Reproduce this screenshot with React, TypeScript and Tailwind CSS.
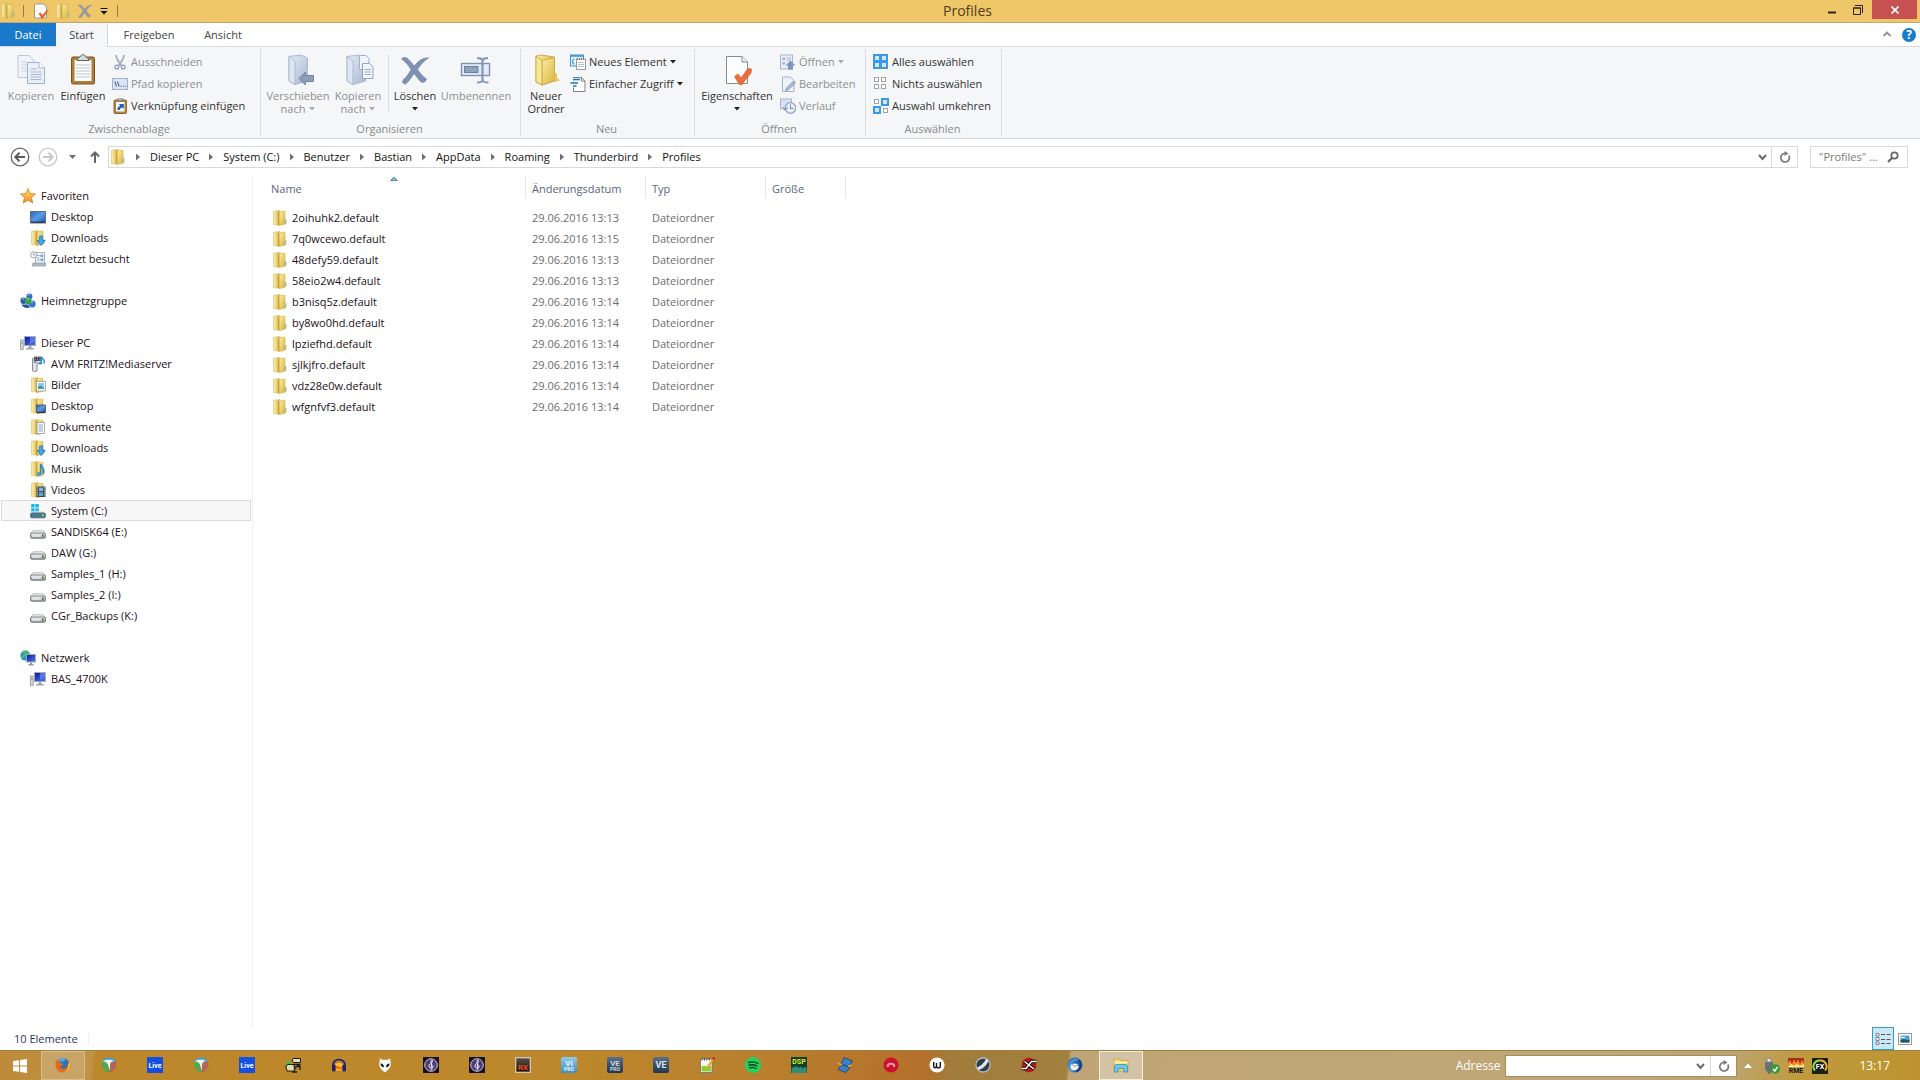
import React from 'react';
import type { ReactNode } from 'react';

/* ---------- shared icon helpers ---------- */

type SvgProps = { w?: number; h?: number; vb?: string; children: ReactNode };
const Svg = ({ w = 16, h = 16, vb = '0 0 16 16', children }: SvgProps) => (
  <svg width={w} height={h} viewBox={vb} fill="none" className="shrink-0" aria-hidden="true">
    {children}
  </svg>
);

const Defs = () => (
  <svg width="0" height="0" className="absolute" aria-hidden="true">
    <defs>
      <linearGradient id="fold" x1="0" y1="0" x2="1" y2="1">
        <stop offset="0" stopColor="#fbeea8" />
        <stop offset="1" stopColor="#dcb23a" />
      </linearGradient>
      <linearGradient id="foldB" x1="0" y1="0" x2="1" y2="0">
        <stop offset="0" stopColor="#faeeb0" />
        <stop offset="1" stopColor="#dcb94c" />
      </linearGradient>
      <linearGradient id="blueFold" x1="0" y1="0" x2="1" y2="1">
        <stop offset="0" stopColor="#e3ebf6" />
        <stop offset="1" stopColor="#a9b8d0" />
      </linearGradient>
      <linearGradient id="screen" x1="0" y1="0" x2="1" y2="1">
        <stop offset="0" stopColor="#2b62b8" />
        <stop offset="0.5" stopColor="#5b9be6" />
        <stop offset="1" stopColor="#1d4f9e" />
      </linearGradient>
      <linearGradient id="navy" x1="0" y1="0" x2="1" y2="1">
        <stop offset="0" stopColor="#0a12a0" />
        <stop offset="1" stopColor="#4d7df0" />
      </linearGradient>
      <linearGradient id="drive" x1="0" y1="0" x2="0" y2="1">
        <stop offset="0" stopColor="#f4f4f4" />
        <stop offset="1" stopColor="#9a9a9a" />
      </linearGradient>
      <linearGradient id="slate" x1="0" y1="0" x2="0" y2="1">
        <stop offset="0" stopColor="#5a6f88" />
        <stop offset="1" stopColor="#22364d" />
      </linearGradient>
      <linearGradient id="sky" x1="0" y1="0" x2="0" y2="1">
        <stop offset="0" stopColor="#8ecbea" />
        <stop offset="1" stopColor="#3d8dbd" />
      </linearGradient>
      <linearGradient id="star" x1="0" y1="0" x2="0" y2="1">
        <stop offset="0" stopColor="#ffe27a" />
        <stop offset="1" stopColor="#f08a1c" />
      </linearGradient>
      <linearGradient id="rx" x1="0" y1="0" x2="0" y2="1">
        <stop offset="0" stopColor="#55504c" />
        <stop offset="1" stopColor="#1c0d08" />
      </linearGradient>
    </defs>
  </svg>
);

const FolderShape = () => (
  <>
    <path d="M1.5 1.2 L8 0.5 V15.2 L1.5 14.6 Z" fill="url(#foldB)" stroke="#d8bd62" strokeWidth="0.6" />
    <path d="M7 1.6 L13 1.2 V14.2 L7 15.6 Z" fill="url(#fold)" stroke="#d3b04a" strokeWidth="0.6" />
    <path d="M5.6 1.6 L7.4 2.6 V15.6 L5.6 14.8 Z" fill="#c79b30" opacity="0.7" />
    <path d="M12.6 9.5 L14.4 9 V13.6 L12.6 14 Z" fill="#9dbfa0" />
  </>
);
const Folder = ({ children }: { children?: ReactNode }) => (
  <Svg>
    <FolderShape />
    {children}
  </Svg>
);

/* ---------- navigation pane icons ---------- */

const StarIcon = () => (
  <Svg>
    <path d="M8 0.6 L10.1 5.6 L15.5 6 L11.4 9.5 L12.8 15 L8 12 L3.2 15 L4.6 9.5 L0.5 6 L5.9 5.6 Z" fill="url(#star)" stroke="#dc7a1a" strokeWidth="0.8" />
  </Svg>
);
const DesktopIcon = () => (
  <Svg>
    <rect x="0.5" y="2.5" width="15" height="11.5" fill="url(#screen)" stroke="#5f6f86" />
    <path d="M1 12.6 H15 V13.8 H1 Z" fill="#2a3444" />
  </Svg>
);
const DownArrow = () => (
  <path d="M9.6 6 H12.6 V10.5 H15.2 L11.1 15.6 L7 10.5 H9.6 Z" fill="#49a8ea" stroke="#1f76bd" strokeWidth="0.8" />
);
const DownloadsIcon = () => <Folder><DownArrow /></Folder>;
const PicturesIcon = () => (
  <Folder>
    <rect x="6.5" y="4.5" width="9" height="9.5" fill="#fff" stroke="#8a9aa8" strokeWidth="0.8" />
    <rect x="8" y="6" width="6" height="6" fill="#8fc5e8" />
    <path d="M8 12 V10 L10.5 8.6 L14 11 V12 Z" fill="#4c9a78" />
  </Folder>
);
const DesktopFolderIcon = () => (
  <Folder>
    <rect x="6.5" y="7" width="9" height="7" fill="url(#screen)" stroke="#44566f" strokeWidth="0.8" />
    <path d="M7 14 H15.5 V15.2 H7 Z" fill="#2b3644" />
  </Folder>
);
const DocumentsIcon = () => (
  <Folder>
    <rect x="7" y="3.5" width="7.5" height="11" fill="#fff" stroke="#8a9aa8" strokeWidth="0.8" />
    <path d="M8.5 6 H13 M8.5 8 H13 M8.5 10 H13 M8.5 12 H13" stroke="#6c8cae" strokeWidth="0.8" />
  </Folder>
);
const MusicIcon = () => (
  <Folder>
    <path d="M10.6 3 C11 6.4 15.5 7.4 13.2 12.4" stroke="#2a86c4" strokeWidth="1.6" />
    <ellipse cx="9" cy="13" rx="2.4" ry="1.9" fill="#3fa0dc" />
    <path d="M10.6 3 V13" stroke="#2a86c4" strokeWidth="1.4" />
  </Folder>
);
const VideosIcon = () => (
  <Folder>
    <rect x="6.5" y="4.5" width="9" height="10.5" fill="#3a4856" />
    <path d="M7.6 5.2 V15 M14.4 5.2 V15" stroke="#dce5ec" strokeWidth="0.9" strokeDasharray="1.2 1.2" />
    <rect x="9" y="5.6" width="4" height="3.6" fill="#7cb8de" />
    <rect x="9" y="10.4" width="4" height="3.6" fill="#6aa6c8" />
  </Folder>
);
const RecentIcon = () => (
  <Svg>
    <rect x="5.5" y="1.5" width="9" height="11" fill="#f2f5f8" stroke="#93a0ab" strokeWidth="0.8" />
    <path d="M7 4.5 H9.5 M7 7 H9.5 M7 9.2 H9.5" stroke="#9aa7b2" />
    <path d="M10.5 3.5 H13.2 V6 H10.5 Z M10.5 7.5 H13.2 V10 H10.5 Z" fill="#62a6dc" />
    <path d="M3 12 H15.5 V15 H2 Z" fill="#b4bcc3" stroke="#868e95" strokeWidth="0.6" />
    <circle cx="3.6" cy="3.8" r="3" fill="#fff" stroke="#8b98a3" strokeWidth="0.9" />
    <path d="M3.6 2 V4 H5" stroke="#6b7680" strokeWidth="0.7" />
  </Svg>
);
const HomegroupIcon = () => (
  <Svg>
    <circle cx="9.4" cy="3.6" r="3" fill="#2f6fc2" />
    <circle cx="3.6" cy="7.8" r="3.2" fill="#2c5fb4" />
    <circle cx="12.3" cy="11" r="3.4" fill="#3c78c8" />
    <circle cx="8.2" cy="8" r="3.4" fill="#35a546" />
    <path d="M6.5 6.6 A2 2 0 0 1 9 5.8" stroke="#b2ecb8" strokeWidth="1" />
    <path d="M1.5 11.5 C3 14.8 7 15.4 10 14.6 L8 11.6 Z" fill="#2450a0" />
    <path d="M2.2 6.6 A1.8 1.8 0 0 1 4.2 5.8 M8 2.6 A1.6 1.6 0 0 1 10 1.8 M11 9.6 A2 2 0 0 1 13 8.9" stroke="#bcd8f6" strokeWidth="0.9" />
  </Svg>
);
const PcIcon = () => (
  <Svg>
    <rect x="4.5" y="1.5" width="11" height="9" fill="url(#navy)" stroke="#a5adb6" />
    <path d="M10 2 H15 V6 L10 9 Z" fill="#7fa4ff" opacity="0.5" />
    <path d="M8.5 11 H11.5 V13 H14 V14.4 H6 V13 H8.5 Z" fill="#9da5ad" />
    <rect x="0.6" y="5" width="2.6" height="9.4" fill="#cfd5da" stroke="#838b92" strokeWidth="0.7" />
    <rect x="1.2" y="7.4" width="1.4" height="1.2" fill="#4fb548" />
  </Svg>
);
const MediaIcon = () => (
  <Svg>
    <rect x="2.5" y="2" width="4.6" height="13.4" rx="1" fill="#dfe2e5" stroke="#7c8388" strokeWidth="0.9" />
    <path d="M3.8 4 H6 M3.8 6 H6" stroke="#3b4247" />
    <rect x="4" y="0.6" width="7" height="4.4" fill="#3a424c" />
    <path d="M5 1 V5 M7.5 1 V5 M10 1 V5" stroke="#d3dbe2" strokeWidth="0.8" strokeDasharray="1 0.8" />
    <path d="M11.5 0.5 V7 M11.5 1 C12.5 3 15.4 3.4 14 7.6" stroke="#2f8ecd" strokeWidth="1.3" />
    <ellipse cx="10.2" cy="7.2" rx="1.8" ry="1.4" fill="#2f8ecd" />
  </Svg>
);
const DriveIcon = () => (
  <Svg>
    <path d="M3 6.8 H13 L15.4 9.6 H0.6 Z" fill="#f7f7f7" stroke="#9b9b9b" strokeWidth="0.7" />
    <rect x="0.6" y="9" width="14.8" height="5.2" rx="1.2" fill="url(#drive)" stroke="#6d6d6d" strokeWidth="0.9" />
    <rect x="2" y="10.2" width="8.6" height="2.6" fill="#e3e3ea" />
    <rect x="12" y="10.4" width="1.8" height="2.4" fill="#4b8c3c" />
  </Svg>
);
const SystemDriveIcon = () => (
  <Svg>
    <path d="M1.2 1 H4.6 V4.4 H1.2 Z M5.4 1 H8.8 V4.4 H5.4 Z M1.2 5.2 H4.6 V8.6 H1.2 Z M5.4 5.2 H8.8 V8.6 H5.4 Z" fill="#18b4ea" />
    <path d="M3 8.6 H13 L15.2 10.4 H0.8 Z" fill="#d7dde0" />
    <rect x="0.6" y="10" width="14.8" height="4.8" rx="1.2" fill="#3d7d95" stroke="#5c656a" strokeWidth="0.9" />
    <rect x="12" y="11.2" width="1.8" height="2.2" fill="#7ae05c" />
  </Svg>
);
const NetworkIcon = () => (
  <Svg>
    <circle cx="5.4" cy="5.6" r="5" fill="#2f8fd0" />
    <path d="M2 3 C4 1 6 3 5 5 C4 7 2 6 1.4 8 M6.5 1 C8 2 9 3 8 5" stroke="#4cc25c" strokeWidth="1.8" />
    <rect x="6.5" y="4.5" width="9" height="7.5" fill="url(#navy)" stroke="#a5adb6" strokeWidth="0.9" />
    <path d="M10 12.5 H12 V14 H13.5 V15.4 H8.5 V14 H10 Z" fill="#8f979f" />
  </Svg>
);

/* ---------- ribbon icons ---------- */

const Big = ({ children }: { children: ReactNode }) => <Svg w={32} h={32} vb="0 0 32 32">{children}</Svg>;

const CopyBig = () => (
  <Big>
    <path d="M3 1.5 H14 L19 6.5 V23.5 H3 Z" fill="#eef3fa" stroke="#b9c7de" />
    <path d="M6 8 H12 M6 11 H12 M6 14 H12 M6 17 H12" stroke="#c6d3e6" />
    <path d="M12.5 8.5 H24 L29.5 14 V29.5 H12.5 Z" fill="#eaf0f8" stroke="#a0b2d0" />
    <path d="M24 8.5 V14 H29.5" fill="#fff" stroke="#a0b2d0" />
    <path d="M15.5 15 H22 M15.5 18 H26.5 M15.5 20.5 H26.5 M15.5 23 H26.5 M15.5 25.5 H26.5" stroke="#a7b8d4" strokeWidth="1.2" />
  </Big>
);
const PasteBig = () => (
  <Big>
    <rect x="4.5" y="3" width="23" height="27" rx="1.5" fill="#b17a35" stroke="#7c5422" />
    <rect x="7.5" y="6" width="17" height="21" fill="#fdfdfd" />
    <path d="M8.5 11 H23.5 M8.5 14 H23.5 M8.5 17 H23.5 M8.5 20 H23.5 M8.5 23 H23.5" stroke="#b9c6d6" strokeWidth="1.2" />
    <path d="M10 6.5 C10 3.5 13 4 13.5 2.6 C14 0 18 0 18.5 2.6 C19 4 22 3.5 22 6.5 Z" fill="#d5dadd" stroke="#5d6468" />
  </Big>
);
const BlueFolder = () => (
  <>
    <path d="M5 2.5 L17 1 L23.5 4 V27 L11 30.5 L5 27 Z" fill="url(#blueFold)" stroke="#a3b4cd" strokeWidth="0.9" />
    <path d="M5 2.5 L11 7 V30.5 L5 27 Z" fill="#dce5f1" stroke="#a3b4cd" strokeWidth="0.8" />
  </>
);
const MoveBig = () => (
  <Big>
    <g transform="translate(2 0)"><BlueFolder /></g>
    <path d="M17 24.5 L23.5 18 V21.5 H31.5 V27.5 H23.5 V31 Z" fill="#8d9db6" stroke="#73849f" />
  </Big>
);
const CopyToBig = () => (
  <Big>
    <BlueFolder />
    <path d="M17.5 1.5 H24 L27 4.5 V15.5 H17.5 Z" fill="#f2f6fb" stroke="#9fb1ce" />
    <path d="M20.5 9.5 H27.5 L31 13 V24.5 H20.5 Z" fill="#f2f6fb" stroke="#8fa3c3" />
    <path d="M22.5 15.5 H29 M22.5 18 H29 M22.5 20.5 H29" stroke="#9aadcb" />
  </Big>
);
const DeleteShape = () => (
  <path d="M2.5 5 C4.5 3 7 3.2 9 5 L15.5 12 C19 7 23 4 29.5 3.8 C25 7 21.5 10.5 18.5 15.5 C21.5 19.5 24 23 27.5 25 C26.5 28.5 23 29.5 21 27 L15 19.5 C12 24 9.5 28 6.5 30 C3.5 30 2.8 27.5 4.5 25.5 C7.5 23 10 19.5 12 15.5 C9.5 11.5 6.5 7.5 2.5 5 Z" fill="#7e91b3" stroke="#697c9e" strokeWidth="0.6" />
);
const RenameBig = () => (
  <Big>
    <rect x="1.5" y="9.5" width="28" height="12" fill="#e4ebf5" stroke="#7f93b4" strokeWidth="1.4" />
    <rect x="4.5" y="12.5" width="13.5" height="6" fill="#8fa2c0" stroke="#6b7f9f" />
    <path d="M17 4 C20 4 21.5 4.5 22.5 6 C23.5 4.5 25 4 28 4 M22.5 6 V27 M17 28.5 C20.5 28.5 22 28 22.5 26.5 C23.5 28 25.5 28.5 28.5 28.5" stroke="#8396b6" strokeWidth="2.2" />
  </Big>
);
const NewFolderBig = () => (
  <Big>
    <path d="M6 2 L12 1 L24.5 3 V27 L12 31 L6 28 Z" fill="url(#foldB)" stroke="#c6a23c" strokeWidth="0.8" />
    <path d="M12 6.5 L24.5 3.5 V26.5 L12 31 Z" fill="url(#fold)" stroke="#cba63c" strokeWidth="0.8" />
    <path d="M6 2 L12 6.5 V31 L6 28 Z" fill="#f7e693" stroke="#c6a23c" strokeWidth="0.8" />
    <path d="M24.5 19 L27 19.5 V24 L30 26.5 L24.5 28 Z" fill="#e3c85c" />
  </Big>
);
const PropertiesBig = () => (
  <Big>
    <path d="M5.5 2.5 H21 L26.5 8 V29.5 H5.5 Z" fill="#fdfdfd" stroke="#8c8c8c" />
    <path d="M21 2.5 V8 H26.5" fill="#eee" stroke="#8c8c8c" />
    <path d="M13.5 22.5 L17 20 L20 24 L27 14.5 L30.5 15 L30 19 L20.5 31 L18.5 30.5 Z" fill="#ec6c3c" stroke="#cf5326" strokeWidth="0.6" />
  </Big>
);

const CutIcon = () => (
  <Svg>
    <path d="M4.2 1 C4 4 6.5 8 9.5 11.5 M11.8 1 C12 4 9.5 8 6.5 11.5" stroke="#a8b2c0" strokeWidth="2" />
    <circle cx="4.8" cy="13" r="1.9" stroke="#8b9ec0" strokeWidth="1.3" />
    <circle cx="11.2" cy="13" r="1.9" stroke="#8b9ec0" strokeWidth="1.3" />
  </Svg>
);
const PathIcon = () => (
  <Svg>
    <rect x="0.5" y="2.5" width="15" height="11" fill="#dbe5f3" stroke="#9fb0cb" />
    <path d="M2.8 5.5 L4.6 10.5 M5.4 5.5 L7.2 10.5 M8.5 10.3 H9.8 M11 10.3 H12.3 M13.2 10.3 H14.2" stroke="#5d6e8c" strokeWidth="1.1" />
  </Svg>
);
const ShortcutIcon = () => (
  <Svg>
    <rect x="2" y="2" width="12.5" height="13.5" rx="1" fill="#b57f3e" stroke="#80551f" strokeWidth="0.8" />
    <rect x="4" y="4" width="8.5" height="9.5" fill="#fff" />
    <path d="M5.5 2.8 H11 V0.8 H5.5 Z" fill="#b8bfc4" stroke="#666" strokeWidth="0.6" />
    <path d="M5.5 12 C5 9.5 6.5 8.3 8.2 8 L7 6 H11.8 V10.8 L10 9.4 C8.6 9.8 7.8 10.6 8 12 Z" fill="#1b62b6" />
  </Svg>
);
const NewItemIcon = () => (
  <Svg>
    <rect x="0.5" y="1" width="13" height="11" fill="#e9f4fc" stroke="#3d92ce" />
    <path d="M0.5 2 H13.5" stroke="#3d92ce" strokeWidth="1.6" />
    <path d="M4.5 5 C2 5 2 10 4.5 10" stroke="#3d92ce" strokeWidth="1.2" />
    <rect x="6.5" y="5" width="9" height="10.5" fill="#fff" stroke="#8a9198" strokeWidth="0.9" />
    <path d="M7.5 4.2 V6 M9.5 4.2 V6 M11.5 4.2 V6 M13.5 4.2 V6" stroke="#777" strokeWidth="0.9" />
    <path d="M8 8.5 H14 M8 10.5 H14 M8 12.5 H14" stroke="#b1bac2" strokeWidth="0.9" />
  </Svg>
);
const EasyIcon = () => (
  <Svg>
    <path d="M3.5 1.5 H11.5 L15 5 V15.5 H3.5 Z" fill="#fff" stroke="#7d848a" />
    <path d="M11.5 1.5 V5 H15" stroke="#7d848a" />
    <path d="M2 3.6 H10 M0 7 H8 M2 10 H6.5" stroke="#f5f6f7" strokeWidth="3" />
    <path d="M3 3.6 H10 M0.5 7 H8 M3 10 H6.5" stroke="#1e76b8" strokeWidth="1.5" />
  </Svg>
);
const OpenIcon = () => (
  <Svg>
    <rect x="0.5" y="1" width="12" height="14" fill="#e8eef7" stroke="#a8b7d0" />
    <path d="M2.5 3.5 H5 V6 H2.5 Z M2.5 8 H5 V10.5 H2.5 Z" fill="#9fb1cf" />
    <path d="M6.5 4 H11 M6.5 6 H11" stroke="#a8b7d0" />
    <path d="M10.5 6.5 L15.5 11.5 H13 V15.5 H8 V11.5 H5.5 Z" fill="#8195b8" />
  </Svg>
);
const EditIcon = () => (
  <Svg>
    <path d="M2.5 1 H10.5 L14 4.5 V15.5 H2.5 Z" fill="#eef3fa" stroke="#a0b1cc" />
    <path d="M13.5 5 L15.5 7 L8 14 L5.5 14.5 L6.5 12 Z" fill="#a9bad6" stroke="#8094b5" strokeWidth="0.8" />
  </Svg>
);
const HistoryIcon = () => (
  <Svg>
    <rect x="0.5" y="1" width="11" height="10" fill="#d7e1ef" stroke="#a5b5cf" />
    <circle cx="10.5" cy="10" r="5.3" fill="#e6edf6" stroke="#93a6c6" strokeWidth="1.3" />
    <path d="M10.5 6.5 V10.5 H13.5 M3 9 L5 12 L7.5 9.5" stroke="#7f93b6" strokeWidth="1.1" />
  </Svg>
);
const Sq = ({ x, y, s, on }: { x: number; y: number; s: number; on?: boolean }) =>
  on ? (
    <>
      <rect x={x} y={y} width={s} height={s} fill="#3c97e4" />
      <rect x={x + 2} y={y + 2} width={s - 4} height={s - 4} fill="#cfe8fc" />
    </>
  ) : (
    <rect x={x + 0.5} y={y + 0.5} width={s - 1} height={s - 1} fill="#fff" stroke="#a2a2a2" />
  );
const SelAll = () => (
  <Svg><Sq x={0} y={0} s={8} on /><Sq x={7} y={0} s={8} on /><Sq x={0} y={7} s={8} on /><Sq x={7} y={7} s={8} on /></Svg>
);
const SelNone = () => (
  <Svg><Sq x={1} y={1} s={5} /><Sq x={8} y={1} s={5} /><Sq x={1} y={8} s={5} /><Sq x={8} y={8} s={5} /></Svg>
);
const SelInv = () => (
  <Svg><Sq x={1} y={1} s={5} /><Sq x={8} y={0} s={8} on /><Sq x={0} y={8} s={8} on /><Sq x={10} y={10} s={5} /></Svg>
);

/* ---------- ribbon parts ---------- */

const Caret = ({ dim }: { dim?: boolean }) => (
  <svg width="6" height="4" viewBox="0 0 6 4" className="inline-block shrink-0" aria-hidden="true">
    <path d="M0 0 H6 L3 3.5 Z" fill={dim ? '#a9a9a9' : '#222'} />
  </svg>
);

type LargeProps = { icon: ReactNode; lines: string[]; width: string; dim?: boolean; caret?: boolean };
const Large = ({ icon, lines, width, dim, caret }: LargeProps) => (
  <button type="button" disabled={dim} className={`${width} flex shrink-0 flex-col items-center pt-[3px] leading-[13px] ${dim ? 'text-[#8f8f8f]' : 'text-[#333]'}`}>
    {icon}
    <span className="mt-[3px] whitespace-nowrap">{lines[0]}</span>
    <span className="flex h-[13px] items-center gap-1 whitespace-nowrap">
      {lines[1]}
      {caret && <Caret dim={dim} />}
    </span>
  </button>
);

type SmallProps = { icon: ReactNode; label: string; dim?: boolean; caret?: boolean };
const Small = ({ icon, label, dim, caret }: SmallProps) => (
  <button type="button" disabled={dim} className={`flex h-[22px] items-center gap-[3px] whitespace-nowrap ${dim ? 'text-[#8f8f8f]' : 'text-[#333]'}`}>
    {icon}
    {label}
    {caret && <Caret dim={dim} />}
  </button>
);

const Group = ({ label, width, children }: { label: string; width: string; children: ReactNode }) => (
  <section aria-label={label} className={`${width} my-[2px] flex shrink-0 flex-col border-r border-[#dcdde0] pt-[2px]`}>
    <div className="flex flex-1">{children}</div>
    <div className="h-[14px] pr-[2px] text-center leading-[13px] text-[#8a8a8a]">{label}</div>
  </section>
);

const Ribbon = () => (
  <div className="flex h-[92px] shrink-0 border-b border-[#d5d6d8] bg-[#f5f6f7]">
    <Group label="Zwischenablage" width="w-[261px]">
      <div className="flex pl-[5px]">
        <Large icon={<CopyBig />} lines={['Kopieren']} width="w-[52px]" dim />
        <Large icon={<PasteBig />} lines={['Einfügen']} width="w-[52px]" />
        <div className="flex flex-col pl-[3px]">
          <Small icon={<CutIcon />} label="Ausschneiden" dim />
          <Small icon={<PathIcon />} label="Pfad kopieren" dim />
          <Small icon={<ShortcutIcon />} label="Verknüpfung einfügen" />
        </div>
      </div>
    </Group>
    <Group label="Organisieren" width="w-[260px]">
      <div className="flex pl-[3px]">
        <Large icon={<MoveBig />} lines={['Verschieben', 'nach']} width="w-[68px]" dim caret />
        <Large icon={<CopyToBig />} lines={['Kopieren', 'nach']} width="w-[52px]" dim caret />
        <div className="mt-1 mr-[3px] ml-1 h-[56px] w-px bg-[#dcdde0]" />
        <Large icon={<Big><DeleteShape /></Big>} lines={['Löschen']} width="w-[46px]" caret />
        <Large icon={<RenameBig />} lines={['Umbenennen']} width="w-[76px]" dim />
      </div>
    </Group>
    <Group label="Neu" width="w-[174px]">
      <div className="flex pl-[2px]">
        <Large icon={<NewFolderBig />} lines={['Neuer', 'Ordner']} width="w-[46px]" />
        <div className="flex flex-col pl-px">
          <Small icon={<NewItemIcon />} label="Neues Element" caret />
          <Small icon={<EasyIcon />} label="Einfacher Zugriff" caret />
        </div>
      </div>
    </Group>
    <Group label="Öffnen" width="w-[171px]">
      <div className="flex pl-[3px]">
        <Large icon={<PropertiesBig />} lines={['Eigenschaften']} width="w-[78px]" caret />
        <div className="flex flex-col pl-1">
          <Small icon={<OpenIcon />} label="Öffnen" dim caret />
          <Small icon={<EditIcon />} label="Bearbeiten" dim />
          <Small icon={<HistoryIcon />} label="Verlauf" dim />
        </div>
      </div>
    </Group>
    <Group label="Auswählen" width="w-[136px]">
      <div className="flex flex-col pl-[7px]">
        <Small icon={<SelAll />} label="Alles auswählen" />
        <Small icon={<SelNone />} label="Nichts auswählen" />
        <Small icon={<SelInv />} label="Auswahl umkehren" />
      </div>
    </Group>
  </div>
);

/* ---------- title bar and tabs ---------- */

const TitleBar = () => (
  <header className="grid h-[23px] shrink-0 grid-cols-[1fr_auto_1fr] items-start border-b border-[#bfa672] bg-[#efc768]">
    <div className="flex h-[22px] items-center">
      <Folder />
      <span className="ml-[7px] h-3 w-px bg-[#96794a]" />
      <button type="button" aria-label="Eigenschaften" className="ml-[9px]">
        <Svg>
          <path d="M1.5 1 H10.5 L13.5 4 V15 H1.5 Z" fill="#fff" stroke="#999" />
          <path d="M5.5 10.5 L7.5 9.5 L9.5 12 L13.5 7 L15.5 7.5 L10 15.6 L8.5 15.6 Z" fill="#e8673a" />
        </Svg>
      </button>
      <button type="button" aria-label="Neuer Ordner" className="ml-[6px]"><Folder /></button>
      <button type="button" aria-label="Löschen" className="ml-[6px]">
        <Svg vb="0 0 32 32"><g opacity="0.8"><DeleteShape /></g></Svg>
      </button>
      <button type="button" aria-label="Schnellzugriff anpassen" className="ml-[7px]">
        <Svg w={8} h={8} vb="0 0 8 8"><path d="M0.5 1.5 H7.5" stroke="#111" /><path d="M0.5 4 H7.5 L4 7.5 Z" fill="#111" /></Svg>
      </button>
      <span className="ml-[9px] h-3 w-px bg-[#96794a]" />
    </div>
    <h1 className="pl-[15px] text-sm leading-[22px] text-[#4a3d20]">Profiles</h1>
    <div className="flex justify-end pr-[3px]">
      <button type="button" aria-label="Minimieren" className="flex h-[19px] w-[26px] items-center justify-center">
        <Svg w={10} h={10} vb="0 0 10 10"><path d="M1 7.5 H9" stroke="#222" strokeWidth="2" /></Svg>
      </button>
      <button type="button" aria-label="Verkleinern" className="flex h-[19px] w-[26px] items-center justify-center">
        <Svg w={10} h={10} vb="0 0 10 10"><path d="M0.5 3 H7.5 V9.5 H0.5 Z M0 3 H8" stroke="#222" /><path d="M2 0.5 H9.5 V8" stroke="#222" /></Svg>
      </button>
      <button type="button" aria-label="Schließen" className="ml-px flex h-[19px] w-[45px] items-center justify-center bg-[#c75050]">
        <Svg w={8} h={8} vb="0 0 8 8"><path d="M0.5 0.5 L7.5 7.5 M7.5 0.5 L0.5 7.5" stroke="#fff" strokeWidth="1.6" /></Svg>
      </button>
    </div>
  </header>
);

const Tabs = () => (
  <nav className="flex h-6 shrink-0 border-b border-[#d8d9db] leading-6 text-[#444]">
    <button type="button" className="h-[23px] w-[56px] bg-[#1979ca] pb-px text-white">Datei</button>
    <button type="button" className="h-6 w-[52px] border-r border-[#d8d9db] bg-[#f5f6f7]">Start</button>
    <button type="button" className="ml-2 w-[66px]">Freigeben</button>
    <button type="button" className="ml-2 w-[66px]">Ansicht</button>
    <div className="ml-auto flex items-center gap-[10px] pr-1">
      <button type="button" aria-label="Menüband minimieren">
        <Svg w={10} h={8} vb="0 0 10 8"><path d="M1.5 5 L5 1.5 L8.5 5" stroke="#929292" strokeWidth="1.8" /></Svg>
      </button>
      <button type="button" aria-label="Hilfe" className="size-[14px] rounded-full bg-[#1979ca] text-xs leading-[14px] font-bold text-white">?</button>
    </div>
  </nav>
);

/* ---------- address row ---------- */

const crumbs = ['Dieser PC', 'System (C:)', 'Benutzer', 'Bastian', 'AppData', 'Roaming', 'Thunderbird', 'Profiles'];

const Chevron = () => (
  <Svg w={9} h={8} vb="0 0 9 8"><path d="M1 2 L4.5 6 L8 2" stroke="#6a6a6a" strokeWidth="2" /></Svg>
);
const Refresh = () => (
  <Svg w={12} h={12} vb="0 0 12 12">
    <path d="M9.8 4.5 A4.3 4.3 0 1 1 6 2.4" stroke="#7b7b7b" strokeWidth="1.7" />
    <path d="M5.5 0 L9.5 2.5 L5.5 5 Z" fill="#7b7b7b" />
  </Svg>
);

const AddressRow = () => (
  <div className="flex h-[37px] shrink-0 items-start pt-[7px] pr-3">
    <div className="flex h-[22px] w-[108px] shrink-0 items-center pl-[10px]">
      <button type="button" aria-label="Zurück">
        <Svg w={20} h={20} vb="0 0 20 20"><circle cx="10" cy="10" r="8.8" stroke="#6a6a6a" strokeWidth="1.3" /><path d="M15 10 H6 M9.5 5.8 L5.3 10 L9.5 14.2" stroke="#5b5b5b" strokeWidth="2" /></Svg>
      </button>
      <button type="button" aria-label="Vorwärts" disabled className="ml-2">
        <Svg w={20} h={20} vb="0 0 20 20"><circle cx="10" cy="10" r="8.8" stroke="#c8c8c8" strokeWidth="1.3" /><path d="M5 10 H14 M10.5 5.8 L14.7 10 L10.5 14.2" stroke="#c8c8c8" strokeWidth="2" /></Svg>
      </button>
      <button type="button" aria-label="Verlauf" className="ml-[11px]">
        <Svg w={7} h={4} vb="0 0 7 4"><path d="M0 0 H7 L3.5 4 Z" fill="#6d6d6d" /></Svg>
      </button>
      <button type="button" aria-label="Nach oben" className="ml-[14px]">
        <Svg w={10} h={12} vb="0 0 10 12"><path d="M5 12 V2 M1 5.5 L5 1.5 L9 5.5" stroke="#666" strokeWidth="2" /></Svg>
      </button>
    </div>
    <div className="flex h-[22px] min-w-0 flex-1 items-center border border-[#d9d9d9] pl-px text-[#111]">
      <Folder />
      {crumbs.map((c) => (
        <React.Fragment key={c}>
          <Svg w={24} h={8} vb="0 0 24 8"><path d="M10 0.5 L14 4 L10 7.5 Z" fill="#6f6f6f" /></Svg>
          <a href="#" className="whitespace-nowrap">{c}</a>
        </React.Fragment>
      ))}
      <button type="button" aria-label="Vorherige Orte" className="ml-auto flex h-full w-[18px] items-center justify-center"><Chevron /></button>
      <button type="button" aria-label="Aktualisieren" className="flex h-full w-[26px] items-center justify-center border-l border-[#d9d9d9]"><Refresh /></button>
    </div>
    <label className="ml-3 flex h-[22px] w-[98px] items-center border border-[#d9d9d9] pr-2 pl-2">
      <input aria-label="Profiles durchsuchen" placeholder={'"Profiles" ...'} className="w-0 flex-1 bg-transparent outline-none placeholder:text-[#7a7a7a]" />
      <Svg w={12} h={12} vb="0 0 12 12"><circle cx="7.5" cy="4.5" r="3.2" stroke="#666" strokeWidth="1.7" /><path d="M5 7 L1 11" stroke="#666" strokeWidth="2.2" /></Svg>
    </label>
  </div>
);

/* ---------- navigation pane ---------- */

type NavItem = { label: string; icon: ReactNode; selected?: boolean };
type NavSection = NavItem & { items: NavItem[] };

const sections: NavSection[] = [
  {
    label: 'Favoriten', icon: <StarIcon />, items: [
      { label: 'Desktop', icon: <DesktopIcon /> },
      { label: 'Downloads', icon: <DownloadsIcon /> },
      { label: 'Zuletzt besucht', icon: <RecentIcon /> },
    ],
  },
  { label: 'Heimnetzgruppe', icon: <HomegroupIcon />, items: [] },
  {
    label: 'Dieser PC', icon: <PcIcon />, items: [
      { label: 'AVM FRITZ!Mediaserver', icon: <MediaIcon /> },
      { label: 'Bilder', icon: <PicturesIcon /> },
      { label: 'Desktop', icon: <DesktopFolderIcon /> },
      { label: 'Dokumente', icon: <DocumentsIcon /> },
      { label: 'Downloads', icon: <DownloadsIcon /> },
      { label: 'Musik', icon: <MusicIcon /> },
      { label: 'Videos', icon: <VideosIcon /> },
      { label: 'System (C:)', icon: <SystemDriveIcon />, selected: true },
      { label: 'SANDISK64 (E:)', icon: <DriveIcon /> },
      { label: 'DAW (G:)', icon: <DriveIcon /> },
      { label: 'Samples_1 (H:)', icon: <DriveIcon /> },
      { label: 'Samples_2 (I:)', icon: <DriveIcon /> },
      { label: 'CGr_Backups (K:)', icon: <DriveIcon /> },
    ],
  },
  { label: 'Netzwerk', icon: <NetworkIcon />, items: [{ label: 'BAS_4700K', icon: <PcIcon /> }] },
];

const NavPane = () => (
  <nav aria-label="Navigation" className="flex w-[253px] shrink-0 flex-col gap-[21px] border-r border-[#f0f0f0] pt-[9px] text-[#1a1020]">
    {sections.map((s) => (
      <ul key={s.label}>
        <li><a href="#" className="flex h-[21px] items-center gap-[5px] pl-5">{s.icon}{s.label}</a></li>
        {s.items.map((i) => (
          <li key={i.label}>
            <a href="#" className={`mx-px flex h-[21px] items-center gap-[5px] border pl-7 ${i.selected ? 'border-[#dadada] bg-[#f7f7f7]' : 'border-transparent'}`}>
              {i.icon}{i.label}
            </a>
          </li>
        ))}
      </ul>
    ))}
  </nav>
);

/* ---------- file list ---------- */

const files: [string, string][] = [
  ['2oihuhk2.default', '13:13'],
  ['7q0wcewo.default', '13:15'],
  ['48defy59.default', '13:13'],
  ['58eio2w4.default', '13:13'],
  ['b3nisq5z.default', '13:14'],
  ['by8wo0hd.default', '13:14'],
  ['lpziefhd.default', '13:14'],
  ['sjlkjfro.default', '13:14'],
  ['vdz28e0w.default', '13:14'],
  ['wfgnfvf3.default', '13:14'],
];

const Head = ({ label, first }: { label: string; first?: boolean }) => (
  <th scope="col" className="p-0 text-left align-top font-normal">
    <button type="button" className={`relative flex h-[22px] w-full items-center border-r border-[#e2e8ef] pt-1 ${first ? 'pl-[18px]' : 'pl-[6px]'}`}>
      {label}
      {first && (
        <span className="absolute top-0 left-1/2 pl-px">
          <Svg w={8} h={5} vb="0 0 8 5"><path d="M0.5 4.5 L4 1 L7.5 4.5 Z" fill="#8ac3d8" stroke="#42788c" strokeWidth="0.8" /></Svg>
        </span>
      )}
    </button>
  </th>
);

const FileList = () => (
  <main className="min-w-0 flex-1">
    <table className="table-fixed border-collapse">
      <colgroup>
        <col className="w-[273px]" />
        <col className="w-[120px]" />
        <col className="w-[120px]" />
        <col className="w-[80px]" />
      </colgroup>
      <thead className="text-[#5a6480]">
        <tr className="h-[31px]">
          <Head label="Name" first />
          <Head label="Änderungsdatum" />
          <Head label="Typ" />
          <Head label="Größe" />
        </tr>
      </thead>
      <tbody className="text-[#6d6d6d]">
        {files.map(([name, time]) => (
          <tr key={name} className="h-[21px]">
            <td className="py-0 pr-0 pl-[19px]">
              <a href="#" className="flex items-center gap-1 text-[#1a1020]"><Folder />{name}</a>
            </td>
            <td className="py-0 pr-0 pl-[6px]">29.06.2016 {time}</td>
            <td className="py-0 pr-0 pl-[6px]">Dateiordner</td>
            <td />
          </tr>
        ))}
      </tbody>
    </table>
  </main>
);

const StatusBar = () => (
  <footer className="flex h-[23px] shrink-0 items-center text-[#2c3560]">
    <span className="ml-[14px]">10 Elemente</span>
    <span className="ml-[10px] h-3 w-px bg-[#f0f0f0]" />
    <div className="ml-auto flex items-center gap-1 pr-2">
      <button type="button" aria-label="Details" className="flex h-[23px] w-[22px] items-center justify-center border border-[#3a9ac4] bg-[#cbe8f6]">
        <Svg>
          <path d="M1 2.5 H4 V5 H1 Z M1 6.5 H4 V9.5 H1 Z M1 11 H4 V13.5 H1 Z" fill="#fff" stroke="#777" strokeWidth="0.9" />
          <path d="M6 3.5 H10 M11.5 3.5 H15.5 M6 8.5 H10 M11.5 8.5 H15.5 M6 12.5 H10 M11.5 12.5 H15.5" stroke="#555" />
        </Svg>
      </button>
      <button type="button" aria-label="Große Symbole">
        <Svg w={14} h={14} vb="0 0 14 14">
          <rect x="0.5" y="1.5" width="13" height="11" fill="#fff" stroke="#999" />
          <rect x="2.5" y="3.5" width="9" height="7" fill="#4f9fd8" />
          <path d="M2.5 10.5 V8 C6 6 8 9 11.5 7.5 V10.5 Z" fill="#23506b" />
          <path d="M3 5.5 H7" stroke="#e8f4fc" strokeWidth="1.5" />
        </Svg>
      </button>
    </div>
  </footer>
);

/* ---------- taskbar ---------- */

const T = ({ x, y, s, c, children }: { x: number; y: number; s: number; c: string; children: string }) => (
  <text x={x} y={y} fontSize={s} fill={c} fontWeight="700" textAnchor="middle" fontFamily="Roboto, sans-serif">{children}</text>
);

const Firefox = () => (
  <Svg>
    <circle cx="8" cy="7.6" r="6.6" fill="#3b6fb5" />
    <path d="M3 2.5 C5 0.5 9 0.5 11 1.5 L9 4 L5 5 Z" fill="#5fa8d8" />
    <path d="M1 3 C-0.5 8 1 15.5 8 15.5 C15 15.5 17 8.5 14 3.5 C14.5 6 13.5 7 13 7.5 C12.5 12 8.5 12.8 6 11 C4.5 9.5 5.5 8.5 7.5 8.5 L8.5 7 L5 6 L4.5 4 C3 4 2 4 1 3 Z" fill="#e66a1c" />
    <path d="M14 3.5 C16.5 8 14.5 14.5 9 15.3 C13 13 13.5 9.5 13 7.5 C13.8 6.5 14.3 5 14 3.5 Z" fill="#f7c02c" />
  </Svg>
);
const Reaper = () => (
  <Svg>
    <path d="M0.8 5 C2 -1 14 -1 15.2 5 L8 7 Z" fill="#4f9ec4" />
    <path d="M0.8 4 C-0.5 10 3 14.5 8 15.8 L9 9 L4 4.5 Z" fill="#58a648" />
    <path d="M15.2 4 C16.5 10 13 14.5 8 15.8 L8.5 6 Z" fill="#b4645a" />
    <path d="M1.5 4.6 C4 2.2 10 2 13 4 C9.5 4.2 8.4 6.5 9.2 13.5 C7.5 11.5 7.8 8 6.2 6.3 C5 5 3.2 4.6 1.5 4.6 Z" fill="#f3f3ee" />
  </Svg>
);
const Live = () => (
  <Svg><rect width="16" height="16" fill="#1450e0" /><T x={8} y={11} s={7} c="#fff">Live</T></Svg>
);
const Cream = () => (
  <Svg>
    <path d="M0.5 8 L2 3 L4 6 L5 1.5 L7 8 Z" fill="#57b23a" />
    <path d="M8 1.5 H15.5 V5.5 H9 L7 4 Z" fill="#e9e4b8" stroke="#1a1a1a" />
    <path d="M0.8 9 L3 7.5 H9 L9.5 14 H2 Z" fill="#e3dda8" stroke="#1a1a1a" />
    <path d="M8.5 7.5 H14.5 L11 10.5 M10 12.5 V10 L15 9 V13 M7 15 H12" stroke="#1a1a1a" strokeWidth="1.3" />
  </Svg>
);
const Audacity = () => (
  <Svg>
    <path d="M2 9 C1 0.5 15 0.5 14 9" stroke="#23237c" strokeWidth="1.8" />
    <path d="M4.5 7.5 C5 5.5 11 5.5 11.5 7.5 V13.5 H4.5 Z" fill="#f7c428" />
    <path d="M4.5 9.5 L7 8.5 L9 10.5 L11.5 9 V12 L9 12.5 L6.5 11.5 L4.5 12.5 Z" fill="#ec6a1a" />
    <rect x="1" y="7.5" width="3.6" height="7" rx="1.5" fill="#20206e" />
    <rect x="11.4" y="7.5" width="3.6" height="7" rx="1.5" fill="#20206e" />
  </Svg>
);
const Alien = () => (
  <Svg>
    <path d="M3 1 L5 2.8 H11 L13 1 L13.8 7 C13.8 11 10.5 13.5 8 15.5 C5.5 13.5 2.2 11 2.2 7 Z" fill="#f8f8f8" />
    <path d="M3.5 6.5 C5.5 6.5 7 8 7 10.3 C5 10.3 3.5 9 3.5 6.5 Z M12.5 6.5 C10.5 6.5 9 8 9 10.3 C11 10.3 12.5 9 12.5 6.5 Z" fill="#111" />
  </Svg>
);
const Clef = () => (
  <Svg>
    <rect width="16" height="16" fill="#16121c" />
    <circle cx="8" cy="8" r="6.3" fill="#4f3c78" stroke="#cfc6dd" strokeWidth="1" />
    <path d="M7.5 13 C9.5 13.5 9 11 8.5 8 L8 4 C8 2.5 10 3 9.5 4.5 C9 6.5 5.5 7 5.8 9.5 C6.2 11.5 10.5 11.5 10.2 9.2 C10 7.7 7.6 8 7.8 9.5" stroke="#f2eef8" strokeWidth="1" />
  </Svg>
);
const Rx = () => (
  <Svg><rect x="0.7" y="0.7" width="14.6" height="14.6" fill="url(#rx)" stroke="#d6c8b8" strokeWidth="1.3" /><T x={8} y={13} s={8} c="#f04a12">RX</T></Svg>
);
const Vi = () => (
  <Svg><rect width="16" height="16" rx="2" fill="url(#sky)" /><T x={8} y={8.5} s={8} c="#e8f6ff">VI</T><T x={8} y={13.5} s={5} c="#e8f6ff">PRO</T></Svg>
);
const VePro = () => (
  <Svg><rect width="16" height="16" rx="2" fill="url(#slate)" /><T x={8} y={8.5} s={8} c="#cdd7e2">VE</T><T x={8} y={13.5} s={5} c="#cdd7e2">PRO</T></Svg>
);
const Ve = () => (
  <Svg><rect width="16" height="16" rx="2" fill="url(#slate)" /><T x={8} y={11} s={9} c="#d6e2ee">VE</T></Svg>
);
const Notepad = () => (
  <Svg>
    <rect x="1.5" y="2" width="11.5" height="13.5" fill="#fcfcf4" stroke="#777" strokeWidth="0.9" />
    <path d="M2.5 9 H12 V14.5 H2.5 Z" fill="#8fce38" />
    <path d="M3 1 V3.5 M5.5 1 V3.5 M8 1 V3.5 M10.5 1 V3.5" stroke="#555" />
    <path d="M14.5 1.5 L8 11" stroke="#e9a824" strokeWidth="2.2" />
    <path d="M14 2.5 L15.2 0.5" stroke="#b5222a" strokeWidth="2.2" />
  </Svg>
);
const Spotify = () => (
  <Svg>
    <circle cx="8" cy="8" r="8" fill="#1ed45f" />
    <path d="M3.5 5.5 C6.5 4.5 10 4.8 13 6.3 M4 8.2 C6.5 7.4 9.5 7.7 12 9 M4.5 10.8 C6.5 10.2 9 10.4 11 11.5" stroke="#123c20" strokeWidth="1.4" strokeLinecap="round" />
  </Svg>
);
const Dsp = () => (
  <Svg>
    <rect width="16" height="16" fill="#173d2c" />
    <T x={8} y={7} s={7} c="#d8f020">DSP</T>
    <path d="M0.5 16 V10 L2 11 L3 9 L5 10.5 L6 9 L8 11 L10 9.5 L12 11.5 L14 9.5 L15.5 11 V16 Z" fill="#2f8f74" />
  </Svg>
);
const Blue = () => (
  <Svg>
    <path d="M7 0.5 L15.5 4 L12 10 L4 7 Z" fill="#3c7fc4" stroke="#1d3f6c" strokeWidth="0.8" />
    <path d="M4.5 7.5 L13 10.5 L9 15.5 L1 12.5 Z" fill="#3c7fc4" stroke="#1d3f6c" strokeWidth="0.8" />
    <path d="M0.5 6 L5 8 M11 9.5 L15 8" stroke="#e9a02e" strokeWidth="1.6" />
  </Svg>
);
const RedPhone = () => (
  <Svg><circle cx="8" cy="8" r="7.6" fill="#cf1130" /><path d="M3.8 10 V8 C5 5 11 5 12.2 8 V10 H10 V8.5 C9 7.6 7 7.6 6 8.5 V10 Z" fill="#f29aa2" /></Svg>
);
const White = () => (
  <Svg><circle cx="8" cy="8" r="7.6" fill="#fff" /><path d="M4.7 5 V9 C4.7 11.5 7.5 11 7.5 9 V6 M7.5 9 C7.5 11.5 11.3 11.5 11.3 9 V5" stroke="#111" strokeWidth="1.4" /></Svg>
);
const Steel = () => (
  <Svg><circle cx="8" cy="8" r="7" fill="#2e3c48" stroke="#aeb8be" strokeWidth="1.3" /><path d="M2 10.5 C5 9.5 9 6 11 2 L13.5 3.5 C12 8 8 12 3.5 13 Z" fill="#dfe5e8" /></Svg>
);
const Cross = () => (
  <Svg><circle cx="8" cy="8" r="7.3" fill="#bb1616" /><path d="M3.5 4.5 L13 12 M0.5 11.5 H5 L10.5 4.5 H15.5" stroke="#111" strokeWidth="3.4" /><path d="M3.5 4.5 L13 12 M0.5 11.5 H5 L10.5 4.5 H15.5" stroke="#fff" strokeWidth="1.3" /></Svg>
);
const Thunderbird = () => (
  <Svg>
    <circle cx="8" cy="8" r="7.5" fill="#2565ae" />
    <path d="M1 9 C1 3 8 -1 13 3 C9 3 5 5 4 9 C4 13 6 14.5 8 15.5 C4 15.5 1 13 1 9 Z" fill="#4a94d6" />
    <ellipse cx="7.5" cy="10" rx="4" ry="3.4" fill="#f1f1ea" />
    <path d="M5 7.5 L8 9.5 L11 8" stroke="#8e99a3" strokeWidth="0.9" />
    <path d="M9 14 C14 13 15 7 12 3" stroke="#173f78" strokeWidth="1.8" />
  </Svg>
);
const Explorer = () => (
  <Svg>
    <path d="M1 2 H7 L8 3.5 H15 V14 H1 Z" fill="#f0d877" stroke="#c7a640" strokeWidth="0.8" />
    <path d="M1.5 5.5 H14.5" stroke="#fdf3bd" strokeWidth="1.6" />
    <path d="M1.5 15 V10 C1.5 8 3 7.5 4 7.5 H12 C13.5 7.5 14.5 8.5 14.5 10 V15 H11 V11.5 H5 V15 Z" fill="#72c6e8" stroke="#2f92bd" strokeWidth="0.8" />
  </Svg>
);

const apps: { name: string; icon: ReactNode; state?: 'open' | 'active' }[] = [
  { name: 'Firefox', icon: <Firefox />, state: 'open' },
  { name: 'Reaper', icon: <Reaper /> },
  { name: 'Live', icon: <Live /> },
  { name: 'Reaper 64', icon: <Reaper /> },
  { name: 'Live 9', icon: <Live /> },
  { name: 'Editor', icon: <Cream /> },
  { name: 'Audacity', icon: <Audacity /> },
  { name: 'Foobar', icon: <Alien /> },
  { name: 'Notensatz', icon: <Clef /> },
  { name: 'Notensatz 2', icon: <Clef /> },
  { name: 'RX', icon: <Rx /> },
  { name: 'VI Pro', icon: <Vi /> },
  { name: 'VE Pro', icon: <VePro /> },
  { name: 'VE', icon: <Ve /> },
  { name: 'Notizen', icon: <Notepad /> },
  { name: 'Spotify', icon: <Spotify /> },
  { name: 'DSP', icon: <Dsp /> },
  { name: 'Verbindung', icon: <Blue /> },
  { name: 'Telefon', icon: <RedPhone /> },
  { name: 'W', icon: <White /> },
  { name: 'Kugel', icon: <Steel /> },
  { name: 'X', icon: <Cross /> },
  { name: 'Thunderbird', icon: <Thunderbird /> },
  { name: 'Explorer', icon: <Explorer />, state: 'active' },
];

const stateClass = {
  none: 'border-transparent',
  open: 'border-[#d8bd8a] bg-[#c8a567]',
  active: 'border-[#f4eee2] bg-[#d3c3a4]',
};

const Taskbar = () => (
  <div className="flex h-[30px] shrink-0 items-center border-t border-[#a08040] bg-[linear-gradient(97deg,#bd8a38_0,#bf9448_92px,#bd872b_96px,#bd882b_560px,#b97f2e_760px,#b4702b_920px,#a17c3a_945px,#a2803e_1061px,#bfa576_1064px,#bfa778_1600px,#bda471_1720px,#bf9a3c_1790px,#bd9330_100%)]">
    <button type="button" aria-label="Start" className="flex w-10 shrink-0 items-center justify-center">
      <Svg w={14} h={14} vb="0 0 14 14"><path d="M0 2 L6 1.2 V6.6 H0 Z M7 1 L14 0 V6.6 H7 Z M0 7.5 H6 V12.8 L0 12 Z M7 7.5 H14 V14 L7 13 Z" fill="#fff" /></Svg>
    </button>
    {apps.map((a) => (
      <button key={a.name} type="button" aria-label={a.name} className={`mx-px flex h-[29px] w-11 shrink-0 items-center justify-center border pb-px ${stateClass[a.state ?? 'none']}`}>
        {a.icon}
      </button>
    ))}
    <label htmlFor="adresse" className="ml-auto pr-[5px] text-xs text-white">Adresse</label>
    <div className="flex h-[22px] w-[232px] border border-[#a58d5e] bg-white">
      <input id="adresse" className="min-w-0 flex-1 outline-none" />
      <button type="button" aria-label="Adressliste" className="flex w-5 items-center justify-center"><Chevron /></button>
      <button type="button" aria-label="Neu laden" className="flex w-[26px] items-center justify-center border-l border-[#d9d9d9]"><Refresh /></button>
    </div>
    <div className="flex items-center gap-2 pl-[7px]">
      <button type="button" aria-label="Ausgeblendete Symbole">
        <Svg w={8} h={5} vb="0 0 8 5"><path d="M0 5 L4 0.5 L8 5 Z" fill="#fff" /></Svg>
      </button>
      <button type="button" aria-label="Hardware entfernen" className="ml-1">
        <Svg>
          <path d="M3 0.5 H7 V4 H3 Z" fill="#e6e9ec" stroke="#777" strokeWidth="0.7" />
          <path d="M1 4 H9 V10 C9 13 7 13 6.5 16 H4 C4 13 1 13 1 10 Z" fill="#6b7075" />
          <circle cx="11.3" cy="11" r="4.7" fill="#2f9e30" />
          <path d="M9 11 L10.8 13 L13.5 9" stroke="#fff" strokeWidth="1.5" />
        </Svg>
      </button>
      <button type="button" aria-label="RME">
        <Svg>
          <rect width="16" height="9" fill="#a8301a" />
          <path d="M0 9 V5 L2 2 L4 6 L6 1.5 L8 5 L10 1.5 L12 6 L14 2 L16 5 V9 Z" fill="#f58a2a" />
          <path d="M0 9 L3 6 L6 8 L9 6 L12 8 L16 6 V9 Z" fill="#fff0a8" />
          <T x={8} y={14.5} s={7} c="#111">RME</T>
        </Svg>
      </button>
      <button type="button" aria-label="FX">
        <Svg>
          <rect width="16" height="16" fill="#1b1d1b" />
          <path d="M3 12.5 A6 6 0 0 1 8 2.5" stroke="#8ee02c" strokeWidth="2" />
          <path d="M8 2.5 A6 6 0 0 1 13 12.5" stroke="#f0b424" strokeWidth="2" />
          <T x={8} y={10.8} s={7} c="#fff">FX</T>
        </Svg>
      </button>
    </div>
    <time className="pr-[30px] pl-[31px] text-xs text-white">13:17</time>
  </div>
);

export default function App() {
  return (
    <div className="flex h-screen flex-col overflow-hidden bg-white font-['Open_Sans','Noto_Sans',sans-serif] text-[11px] leading-[16px]">
      <Defs />
      <TitleBar />
      <Tabs />
      <Ribbon />
      <AddressRow />
      <div className="flex min-h-0 flex-1">
        <NavPane />
        <FileList />
      </div>
      <StatusBar />
      <Taskbar />
    </div>
  );
}
